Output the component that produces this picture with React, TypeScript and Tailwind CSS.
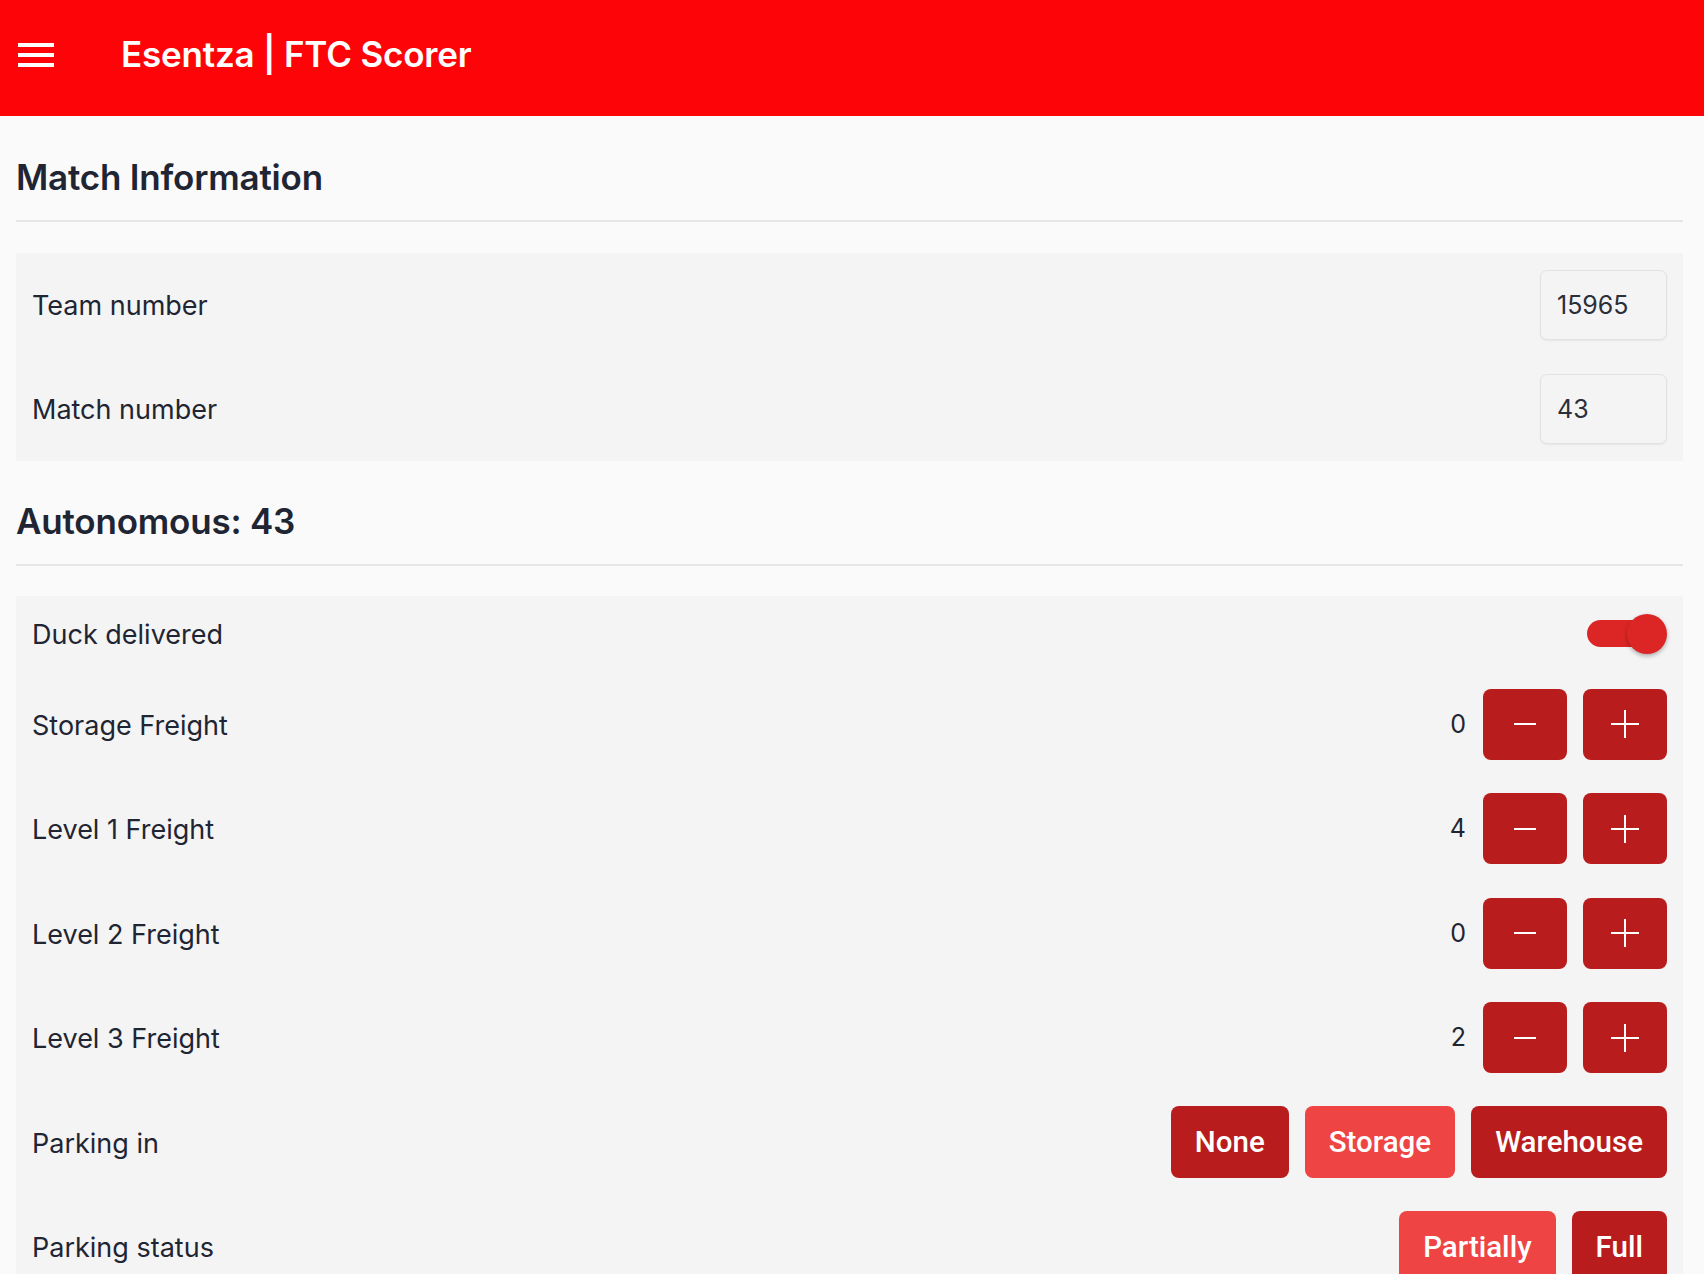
import { useState } from "react";

type CounterRow = { label: string; value: number };

const Section: React.FC<{ children: React.ReactNode }> = ({ children }) => (
  <div className="bg-[#f4f4f4] px-4">{children}</div>
);

const Heading: React.FC<{ title: string; className: string }> = ({
  title,
  className,
}) => (
  <div className={`border-b-2 border-[#e6e6e6] pb-[21px] ${className}`}>
    <h2 className="text-[35px] leading-[44px] font-semibold tracking-[-0.2px] text-[#1f2533]">
      {title}
    </h2>
  </div>
);

const Label: React.FC<{ text: string }> = ({ text }) => (
  <span className="pt-[3px] text-[27px] text-[#1f2533]">{text}</span>
);

const App: React.FC = () => {
  const [duck, setDuck] = useState(true);
  const [counters, setCounters] = useState<CounterRow[]>([
    { label: "Storage Freight", value: 0 },
    { label: "Level 1 Freight", value: 4 },
    { label: "Level 2 Freight", value: 0 },
    { label: "Level 3 Freight", value: 2 },
  ]);
  const [parking, setParking] = useState("Storage");
  const [status, setStatus] = useState("Partially");

  const change = (i: number, d: number) =>
    setCounters((prev) =>
      prev.map((c, j) =>
        j === i ? { ...c, value: Math.max(0, c.value + d) } : c
      )
    );

  return (
    <div className="min-h-[1274px] bg-[#fafafa] font-['Inter',sans-serif]">
      <header className="flex h-[116px] items-center bg-[#fc0408] pb-[7px]">
        <button className="ml-[18px] flex w-[36px] flex-col gap-[6px]">
          <span className="block h-[4px] w-full bg-white" />
          <span className="block h-[4px] w-full bg-white" />
          <span className="block h-[4px] w-full bg-white" />
        </button>
        <h1 className="ml-[67px] text-[35px] font-semibold tracking-[-0.2px] text-white">
          Esentza | FTC Scorer
        </h1>
      </header>

      <main className="pl-4 pr-[21px]">
        <Heading title="Match Information" className="mt-[39px] mb-[31px]" />
        <Section>
          {[
            { label: "Team number", value: "15965" },
            { label: "Match number", value: "43" },
          ].map((r) => (
            <div key={r.label} className="flex h-[104px] items-center justify-between">
              <Label text={r.label} />
              <input
                defaultValue={r.value}
                className="h-[70px] w-[127px] rounded-[7px] border border-[#e2e2e2] bg-[#f4f4f4] pl-4 text-[25px] text-[#2a2f3a] shadow-[0_1px_2px_rgba(0,0,0,0.06)] outline-none"
              />
            </div>
          ))}
        </Section>

        <Heading title="Autonomous: 43" className="mt-[38px] mb-[30px]" />
        <Section>
          <div className="flex h-[76px] items-center justify-between">
            <Label text="Duck delivered" />
            <button
              onClick={() => setDuck(!duck)}
              className="relative h-[40px] w-[80px]"
            >
              <span
                className={`absolute left-0 top-[6px] h-[27px] w-[74px] rounded-full ${
                  duck ? "bg-[#dc2626]" : "bg-[#cfcfcf]"
                }`}
              />
              <span
                className={`absolute top-0 h-[40px] w-[40px] rounded-full shadow-[0_2px_4px_rgba(0,0,0,0.3)] ${
                  duck ? "right-0 bg-[#dc2626]" : "left-0 bg-white"
                }`}
              />
            </button>
          </div>

          {counters.map((c, i) => (
            <div key={c.label} className="flex h-[104.5px] items-center justify-between">
              <Label text={c.label} />
              <div className="flex items-center">
                <span className="mr-[17px] text-[25px] text-[#1f2533]">{c.value}</span>
                <button
                  onClick={() => change(i, -1)}
                  className="flex h-[71px] w-[84px] items-center justify-center rounded-[8px] bg-[#b91c1c]"
                >
                  <svg width="24" height="24" viewBox="0 0 24 24" stroke="white" strokeWidth="2">
                    <path d="M1 12h22" />
                  </svg>
                </button>
                <button
                  onClick={() => change(i, 1)}
                  className="ml-4 flex h-[71px] w-[84px] items-center justify-center rounded-[8px] bg-[#b91c1c]"
                >
                  <svg width="28" height="28" viewBox="0 0 28 28" stroke="white" strokeWidth="2">
                    <path d="M0 14h28M14 0v28" />
                  </svg>
                </button>
              </div>
            </div>
          ))}

          <div className="flex h-[104.5px] items-center justify-between">
            <Label text="Parking in" />
            <div className="flex gap-4">
              {["None", "Storage", "Warehouse"].map((p) => (
                <button
                  key={p}
                  onClick={() => setParking(p)}
                  className={`h-[72px] rounded-[8px] px-[24px] font-['Roboto',sans-serif] text-[29.5px] font-medium text-white ${
                    parking === p ? "bg-[#ef4444]" : "bg-[#b91c1c]"
                  }`}
                >
                  {p}
                </button>
              ))}
            </div>
          </div>

          <div className="flex h-[104.5px] items-center justify-between">
            <Label text="Parking status" />
            <div className="flex gap-4">
              {["Partially", "Full"].map((p) => (
                <button
                  key={p}
                  onClick={() => setStatus(p)}
                  className={`h-[72px] rounded-[8px] px-[24px] font-['Roboto',sans-serif] text-[29.5px] font-medium text-white ${
                    status === p ? "bg-[#ef4444]" : "bg-[#b91c1c]"
                  }`}
                >
                  {p}
                </button>
              ))}
            </div>
          </div>
        </Section>
      </main>
    </div>
  );
};

export default App;
